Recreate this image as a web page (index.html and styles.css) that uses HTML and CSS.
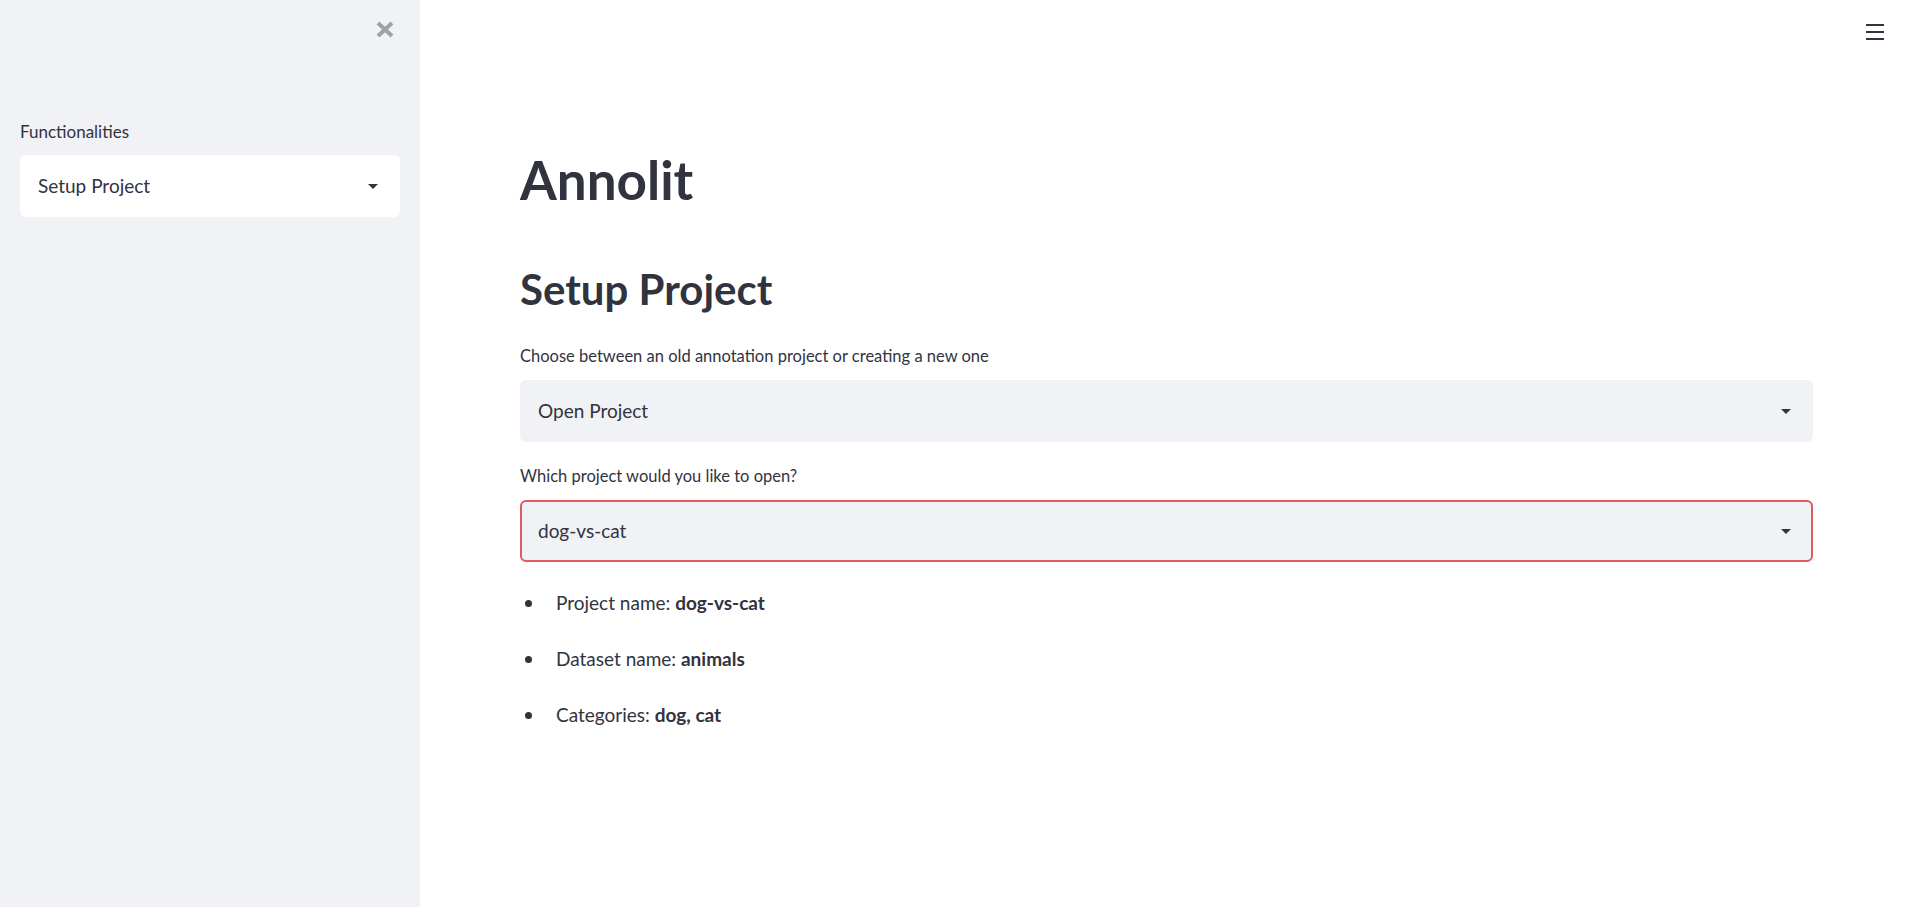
FILE: index.html
```html
<!DOCTYPE html>
<html lang="en">
<head>
<meta charset="utf-8">
<title>Annolit</title>
<link rel="stylesheet" href="styles.css">
</head>
<body>
<aside class="sidebar">
  <div class="sidebar-top">
    <button class="close-btn" aria-label="Close sidebar">
      <svg width="20" height="17" viewBox="0 0 20 17"><path d="M3 2 L17 15 M17 2 L3 15" stroke="#9ea1aa" stroke-width="4" stroke-linecap="butt"/></svg>
    </button>
  </div>
  <div class="field">
    <label class="label label-side">Functionalities</label>
    <div class="select select-white">
      <span class="select-value">Setup Project</span>
      <span class="caret"></span>
    </div>
  </div>
</aside>
<main class="main">
  <button class="menu-btn" aria-label="Menu">
    <span></span><span></span><span></span>
  </button>
  <div class="content">
    <h1 class="title">Annolit</h1>
    <h2 class="subtitle">Setup Project</h2>
    <div class="field field-main">
      <label class="label">Choose between an old annotation project or creating a new one</label>
      <div class="select">
        <span class="select-value">Open Project</span>
        <span class="caret"></span>
      </div>
    </div>
    <div class="field field-main">
      <label class="label">Which project would you like to open?</label>
      <div class="select select-focus">
        <span class="select-value">dog-vs-cat</span>
        <span class="caret"></span>
      </div>
    </div>
    <ul class="info">
      <li>Project name: <strong>dog-vs-cat</strong></li>
      <li>Dataset name: <strong>animals</strong></li>
      <li>Categories: <strong>dog, cat</strong></li>
    </ul>
  </div>
</main>
</body>
</html>
```

FILE: styles.css
```css
* { box-sizing: border-box; }
html, body { margin: 0; padding: 0; }
body {
  display: flex;
  height: 907px;
  overflow: hidden;
  font-family: "Lato", "Open Sans", sans-serif;
  color: #31333f;
  background: #ffffff;
}
.sidebar {
  width: 420px;
  flex: 0 0 420px;
  background: #f0f2f6;
  padding: 0 20px;
}
.sidebar-top {
  height: 121px;
  display: flex;
  justify-content: flex-end;
  align-items: flex-start;
  padding-top: 21px;
  padding-right: 5px;
}
.close-btn, .menu-btn {
  border: 0;
  background: none;
  padding: 0;
  margin: 0;
  cursor: pointer;
  display: block;
}
.close-btn svg { display: block; }
.label {
  display: block;
  font-size: 16.5px;
  line-height: 22px;
  margin-bottom: 13px;
  color: #31333f;
}
.label-side {
  font-size: 17px;
  margin-bottom: 12px;
}
.select {
  height: 62px;
  border-radius: 6px;
  background: #f0f2f6;
  border: 2px solid transparent;
  display: flex;
  align-items: center;
  justify-content: space-between;
  padding: 0 20px 0 16px;
}
.select-white { background: #ffffff; }
.select-focus { border-color: #e05a5e; }
.select-value {
  font-size: 19px;
  line-height: 24px;
}
.caret {
  width: 0; height: 0;
  border-left: 5px solid transparent;
  border-right: 5px solid transparent;
  border-top: 5px solid #31333f;
}
.main {
  flex: 1;
  position: relative;
  padding: 0 107px 0 100px;
}
.menu-btn {
  position: absolute;
  top: 24px;
  right: 36px;
  width: 18px;
  height: 16px;
  display: flex;
  flex-direction: column;
  justify-content: space-between;
}
.menu-btn span {
  display: block;
  height: 2px;
  background: #31333f;
}
.content { padding-top: 148px; }
.title {
  margin: 0;
  font-size: 53px;
  line-height: 64px;
  font-weight: 700;
}
.subtitle {
  margin: 52px 0 0;
  font-size: 42px;
  line-height: 50px;
  font-weight: 700;
}
.subtitle + .field-main { margin-top: 31px; }
.field-main + .field-main { margin-top: 23px; }
.info {
  margin: 29px 0 0;
  padding-left: 36px;
  list-style: none;
}
.info li {
  position: relative;
  font-size: 19px;
  line-height: 24px;
  margin-bottom: 32px;
}
.info li::before {
  content: "";
  position: absolute;
  left: -31px;
  top: 9px;
  width: 7px;
  height: 7px;
  border-radius: 50%;
  background: #31333f;
}
.info strong { font-weight: 700; }
```
